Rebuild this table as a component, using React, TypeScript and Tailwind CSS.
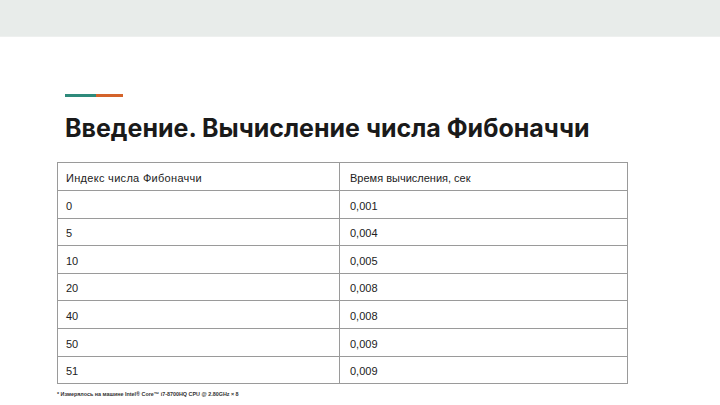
const rows: [string, string][] = [
  ["0", "0,001"],
  ["5", "0,004"],
  ["10", "0,005"],
  ["20", "0,008"],
  ["40", "0,008"],
  ["50", "0,009"],
  ["51", "0,009"],
];

export default function App() {
  return (
    <div className="w-[720px] h-[405px] bg-white overflow-hidden font-['Liberation_Sans',Arial,sans-serif]">
      <div className="h-[37px] bg-[#e8ecea] border-b border-[#eef0ef]" />

      <div className="pl-[65px] pt-[57px]">
        <div className="flex h-[3px] w-[58px]">
          <div className="w-[31px] bg-[#2e8a7b]" />
          <div className="flex-1 bg-[#d4632a]" />
        </div>
        <h1 className="mt-[16px] text-[25px] leading-[30px] font-bold text-[#1a1a1a] font-['Inter',sans-serif]">
          Введение. Вычисление числа Фибоначчи
        </h1>
      </div>

      <div className="ml-[57px] mt-[19px] w-[571px]">
        <table className="w-full border-collapse text-[11px] text-[#222]">
          <tbody>
            <tr className="h-[28px]">
              <td className="w-[282px] border border-[#9a9a9a] pl-[8px] pt-[3px] tracking-[0.3px]">
                Индекс числа Фибоначчи
              </td>
              <td className="border border-[#9a9a9a] pl-[10px] pt-[3px]">
                Время вычисления, сек
              </td>
            </tr>
            {rows.map(([i, t]) => (
              <tr key={i} className="h-[27.6px]">
                <td className="border border-[#9a9a9a] pl-[8px] pt-[3px]">{i}</td>
                <td className="border border-[#9a9a9a] pl-[10px] pt-[3px]">{t}</td>
              </tr>
            ))}
          </tbody>
        </table>
        <p className="mt-[6px] text-[5.4px] text-[#333] font-bold">
          * Измерялось на машине Intel® Core™ i7-8700HQ CPU @ 2.80GHz × 8
        </p>
      </div>
    </div>
  );
}
